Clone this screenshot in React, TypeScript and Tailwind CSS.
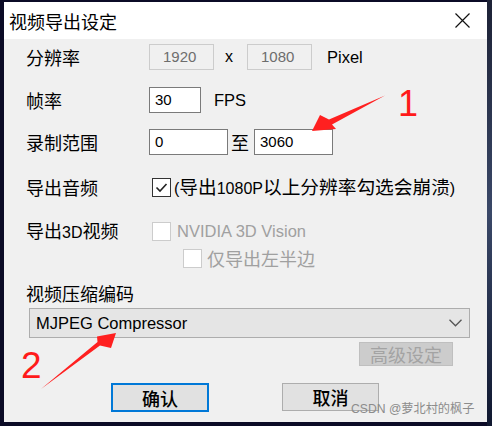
import React from "react";

const cjk = "font-['Noto_Sans_CJK_SC',sans-serif]";
const latin = "font-['Liberation_Sans','Noto_Sans_CJK_SC',sans-serif]";

function Checkbox({ checked, disabled }: { checked?: boolean; disabled?: boolean }) {
  return (
    <div
      className={`w-[19px] h-[19px] shrink-0 bg-white border flex items-center justify-center ${
        disabled ? "border-[#cccccc]" : "border-[#333333]"
      }`}
    >
      {checked && (
        <svg width="15" height="15" viewBox="0 0 15 15">
          <path d="M2.5 7.5 L6 11 L12.5 4" fill="none" stroke="#222" strokeWidth="1.6" />
        </svg>
      )}
    </div>
  );
}

export default function App() {
  return (
    <div className={`relative w-[492px] h-[426px] overflow-hidden bg-[#0b0b26] flex ${cjk}`}>
      {/* left edge */}
      <div className="w-[4px] shrink-0" />

      {/* Dialog */}
      <div className="w-[483px] h-[420px] mt-[2px] flex flex-col shrink-0">
        {/* Title bar */}
        <div className="h-[37px] bg-white flex items-center justify-between pl-[5px] pr-[17px]">
          <span className="text-[18px] text-black leading-none">视频导出设定</span>
          <svg width="15" height="15" viewBox="0 0 15 15">
            <path d="M0.5 0.5 L14.5 14.5 M14.5 0.5 L0.5 14.5" stroke="#111" strokeWidth="1.2" />
          </svg>
        </div>

        {/* Body */}
        <div className="flex-1 bg-[#f0f0f0] flex flex-col pl-[22px] pt-[5px] text-[18px] text-black">
          {/* 分辨率 */}
          <div className="h-[26px] flex items-center">
            <div className="w-[123px] leading-none">分辨率</div>
            <div className={`w-[65px] h-[26px] border border-[#cccccc] bg-[#f0f0f0] flex items-center pl-[13px] text-[15px] text-[#6d6d6d] ${latin}`}>
              1920
            </div>
            <div className={`w-[33px] pl-[11px] text-[16px] ${latin}`}>x</div>
            <div className={`w-[65px] h-[26px] border border-[#cccccc] bg-[#f0f0f0] flex items-center pl-[13px] text-[15px] text-[#6d6d6d] ${latin}`}>
              1080
            </div>
            <div className={`ml-[15px] text-[16.5px] ${latin}`}>Pixel</div>
          </div>

          {/* 帧率 */}
          <div className="h-[26px] mt-[17px] flex items-center">
            <div className="w-[123px] leading-none">帧率</div>
            <div className={`w-[52px] h-[26px] border border-[#7a7a7a] bg-white flex items-center pl-[5px] text-[15px] ${latin}`}>
              30
            </div>
            <div className={`ml-[13px] text-[16.5px] ${latin}`}>FPS</div>
          </div>

          {/* 录制范围 */}
          <div className="h-[26px] mt-[16px] flex items-center">
            <div className="w-[123px] leading-none">录制范围</div>
            <div className={`w-[79px] h-[26px] border border-[#7a7a7a] bg-white flex items-center pl-[5px] text-[15px] ${latin}`}>
              0
            </div>
            <div className="w-[26px] pl-[3px] leading-none">至</div>
            <div className={`w-[79px] h-[26px] border border-[#7a7a7a] bg-white flex items-center pl-[5px] text-[15px] ${latin}`}>
              3060
            </div>
          </div>

          {/* 导出音频 */}
          <div className="h-[26px] mt-[19px] flex items-center">
            <div className="w-[126px] leading-none">导出音频</div>
            <Checkbox checked />
            <div className="ml-[3px] text-[18.7px] leading-none whitespace-nowrap">
              <span className={`text-[16px] ${latin}`}>(</span>导出
              <span className={`text-[16px] ${latin}`}>1080P</span>以上分辨率勾选会崩溃
              <span className={`text-[16px] ${latin}`}>)</span>
            </div>
          </div>

          {/* 导出3D视频 */}
          <div className="h-[26px] mt-[18px] flex items-center">
            <div className="w-[126px] leading-none">
              导出<span className={`text-[16px] ${latin}`}>3D</span>视频
            </div>
            <Checkbox disabled />
            <div className={`ml-[6px] text-[16.5px] text-[#a0a0a0] ${latin}`}>NVIDIA 3D Vision</div>
          </div>
          <div className="h-[20px] mt-[4px] flex items-center pl-[157px]">
            <Checkbox disabled />
            <div className="ml-[5px] text-[18px] text-[#a0a0a0] leading-none">仅导出左半边</div>
          </div>

          {/* 视频压缩编码 */}
          <div className="h-[22px] mt-[14px] flex items-center leading-none">视频压缩编码</div>
          <div className="ml-[3px] mt-[4px] w-[441px] h-[30px] bg-[#e5e5e5] border border-[#adadad] flex items-center justify-between pl-[6px] pr-[7px]">
            <span className={`text-[16.5px] ${latin}`}>MJPEG Compressor</span>
            <svg width="13" height="8" viewBox="0 0 13 8">
              <path d="M0.5 0.8 L6.5 6.8 L12.5 0.8" fill="none" stroke="#555" strokeWidth="1.3" />
            </svg>
          </div>
          <div className="ml-[333px] mt-[4px] w-[94px] h-[24px] bg-[#cccccc] border border-[#bfbfbf] flex items-center justify-center text-[18px] text-[#a3a3a3] leading-none">
            高级设定
          </div>

          {/* buttons */}
          <div className="mt-[17px] flex items-start pl-[85px]">
            <div className="w-[98px] h-[29px] border-2 border-[#0078d7] bg-[#e1e1e1] flex items-center justify-center text-[18px] font-medium leading-none">
              确认
            </div>
            <div className="ml-[73px] w-[97px] h-[28px] border border-[#adadad] bg-[#e1e1e1] flex items-center justify-center text-[18px] font-medium leading-none">
              取消
            </div>
          </div>
        </div>
      </div>

      {/* right edge: desktop background */}
      <div className="flex-1 bg-gradient-to-b from-[#1d2236] via-[#3a4868] to-[#101830]" />

      {/* watermark */}
      <div className={`absolute left-[351px] top-[403px] text-[12.2px] leading-none text-[#8c8c8c] whitespace-nowrap ${latin}`}>
        CSDN @萝北村的枫子
      </div>

      {/* annotations */}
      <svg className="absolute inset-0 pointer-events-none" width="492" height="426" viewBox="0 0 492 426">
        <polygon points="312,131 320,115 329,119.5 385,95.5 332,124.5 336,129" fill="#ff2020" />
        <polygon points="116,333 111,348 100,345.5 41,389 97.5,342 97,336.5" fill="#ff2020" />
      </svg>
      <div className={`absolute left-[398px] top-[86px] text-[36px] leading-none text-[#ff1a1a] ${latin}`}>1</div>
      <div className={`absolute left-[21px] top-[347px] text-[37px] leading-none text-[#ff1a1a] ${latin}`}>2</div>
    </div>
  );
}
